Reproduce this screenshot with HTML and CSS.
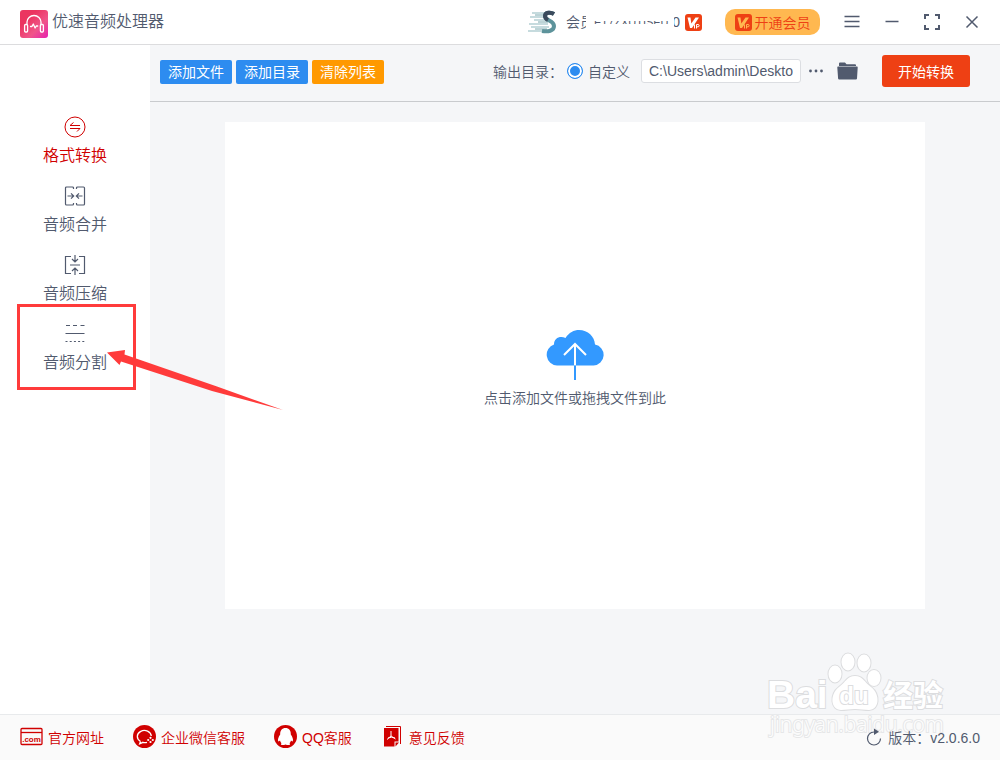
FILE: index.html
```html
<!DOCTYPE html>
<html lang="zh-CN">

<head>
    <meta charset="UTF-8" />
    <meta name="viewport" content="width=device-width, initial-scale=1.0" />
    <title>优速音频处理器</title>
    <link rel="stylesheet" href="styles.css">
</head>

<body>
    <header class="titlebar">
        <svg class="logo" viewBox="0 0 28 28" aria-hidden="true">
            <defs>
                <linearGradient id="logoBg" x1="0" y1="0" x2="1" y2="1">
                    <stop offset="0.3" stop-color="#eb3560" />
                    <stop offset="0.65" stop-color="#f0558a" />
                    <stop offset="1" stop-color="#e620b0" />
                </linearGradient>
            </defs>
            <rect width="28" height="28" rx="3" fill="url(#logoBg)" />
            <g fill="none" stroke="#fff" stroke-width="1.3" stroke-linecap="round" stroke-linejoin="round">
                <path d="M7 14v-2a7 6.5 0 0 1 14 0v2" />
                <rect x="4.6" y="14.5" width="3" height="7.5" rx="1" />
                <rect x="20.4" y="14.5" width="3" height="7.5" rx="1" />
                <path d="M10.5 16.5h1.5l1.3-2.5 1.8 4 1.2-2h1.4" />
            </g>
        </svg>
        <h1 class="app-name">优速音频处理器</h1>

        <div class="account">
            <svg class="avatar" viewBox="0 0 30 24" aria-hidden="true">
                <path d="M5 3h15M3 7h15M7 10h14M2 14h19M4 17h18M1 21h20" stroke="#b4d0d3" stroke-width="1.4" />
                <path d="M8 5h11M11 12h10M8 19h12" stroke="#7ba8ae" stroke-width="1" />
                <path d="M27 4c-3-2-9-2-9 2 0 5 9 4 9 10 0 5-6 6-12 5" fill="none" stroke="#5d939b" stroke-width="4" />
                <path d="M27 4c-3-2-9-2-9 2 0 2 1 3 3 4" fill="none" stroke="#3b4a5c" stroke-width="4" />
            </svg>
            <span class="member-label">会员</span>
            <span class="member-id"><span class="member-digits">ET7ZXUTISEU</span></span>
            <span class="member-tail">0</span>
            <svg class="vip-icon" viewBox="0 0 17 17" aria-hidden="true">
                <rect width="17" height="17" rx="3" fill="#ee4014" />
                <path d="M2.5 3.5h3l.8 6L10.5 3.5H14L7 14H5z" fill="#fff" />
                <path d="M9.5 10.5v4M11.5 14.5v-4H13a1 1 0 0 1 0 2.3h-1.5" fill="none" stroke="#fff" />
            </svg>
        </div>

        <button class="vip-button" type="button">
            <svg class="vip-icon" viewBox="0 0 17 17" aria-hidden="true">
                <rect width="17" height="17" rx="3" fill="#ee4014" />
                <path d="M2.5 3.5h3l.8 6L10.5 3.5H14L7 14H5z" fill="#ffb850" />
                <path d="M9.5 10.5v4M11.5 14.5v-4H13a1 1 0 0 1 0 2.3h-1.5" fill="none" stroke="#ffb850" />
            </svg>
            开通会员
        </button>

        <div class="window-buttons">
            <button type="button" aria-label="菜单">
                <svg viewBox="0 0 20 20"><path d="M2.5 4.5h15M2.5 9.5h15M2.5 14.5h15" /></svg>
            </button>
            <button type="button" aria-label="最小化">
                <svg viewBox="0 0 20 20"><path d="M3.5 9.5h13" /></svg>
            </button>
            <button type="button" aria-label="最大化">
                <svg viewBox="0 0 20 20"><path class="thick" d="M3 7V3h4M13 3h4v4M17 13v4h-4M7 17H3v-4" /></svg>
            </button>
            <button type="button" aria-label="关闭">
                <svg viewBox="0 0 20 20"><path d="M4.5 4.5l11 11M15.5 4.5l-11 11" /></svg>
            </button>
        </div>
    </header>

    <div class="content">
        <nav class="sidebar">
            <a class="nav-item active" href="#convert">
                <svg viewBox="0 0 22 22">
                    <circle cx="11" cy="11" r="10" />
                    <path d="M6 9.5h10M6 9.5l3.5-3M16 12.5H6M16 12.5l-3 3" />
                </svg>
                <span>格式转换</span>
            </a>
            <a class="nav-item" href="#merge">
                <svg viewBox="0 0 22 22">
                    <path d="M9.5 4V3a1 1 0 0 0-1-1h-6a1 1 0 0 0-1 1v16a1 1 0 0 0 1 1h6a1 1 0 0 0 1-1v-1M12.5 4V3a1 1 0 0 1 1-1h6a1 1 0 0 1 1 1v16a1 1 0 0 1-1 1h-6a1 1 0 0 1-1-1v-1" />
                    <path d="M3.5 11h6M7 8.3L9.7 11 7 13.7M18.5 11h-6M15 8.3L12.3 11l2.7 2.7" />
                </svg>
                <span>音频合并</span>
            </a>
            <a class="nav-item" href="#compress">
                <svg viewBox="0 0 22 22">
                    <path d="M7 2.5H1.5v17H7M15 2.5h5.5v17H15M6 11h10M11 1v7M8 5l3 3 3-3M11 21v-7M8 17l3-3 3 3" />
                </svg>
                <span>音频压缩</span>
            </a>
            <a class="nav-item" href="#split">
                <svg viewBox="0 0 22 22">
                    <path d="M2 2.5h4M9 2.5h4M16.5 2.5h4M1.5 10.5h19" />
                    <path d="M1.5 18.5h19" stroke-dasharray="2 2.2" />
                </svg>
                <span>音频分割</span>
            </a>
        </nav>

        <main class="workspace">
            <div class="toolbar">
                <div class="file-buttons">
                    <button class="btn" type="button">添加文件</button>
                    <button class="btn" type="button">添加目录</button>
                    <button class="btn btn-clear" type="button">清除列表</button>
                </div>
                <div class="output">
                    <span class="output-label">输出目录：</span>
                    <input class="radio" type="radio" id="custom_dir" name="output_dir" checked />
                    <label for="custom_dir">自定义</label>
                    <input class="path" type="text" aria-label="输出目录" value="C:\Users\admin\Deskto" />
                    <button class="icon-button dots" type="button" aria-label="更多">
                        <svg viewBox="0 0 16 6"><circle cx="2.5" cy="3" r="1.4" /><circle cx="8" cy="3" r="1.4" /><circle cx="13.5" cy="3" r="1.4" /></svg>
                    </button>
                    <button class="icon-button folder" type="button" aria-label="打开目录">
                        <svg viewBox="0 0 21 18">
                            <path d="M2 4V1.5Q2 .5 3 .5h5l1.5 1.8H18q1 0 1 1V4z" />
                            <path d="M1 4.5h19q.8 0 .7 1L20 16.5q-.1 1-1 1H2.2q-1 0-1.1-1L.3 5.5q-.1-1 .7-1z" />
                        </svg>
                    </button>
                    <button class="start" type="button">开始转换</button>
                </div>
            </div>

            <button class="drop-area" type="button">
                <svg class="cloud" viewBox="0 0 58 50" aria-hidden="true">
                    <path d="M11 35.5A10.8 10.8 0 0 1 8 14.5C8 8 14 5.5 19.5 8 23 2.5 28 0 33 0c9 0 15.5 6.5 16 14.5A10.6 10.6 0 0 1 47.5 35.5z" fill="#3399ff" />
                    <path d="M29 14v21.5M18 25l11-11 11 11" fill="none" stroke="#fff" stroke-width="2" />
                    <path d="M29 35.5V50" stroke="#3399ff" stroke-width="2" />
                </svg>
                <span>点击添加文件或拖拽文件到此</span>
            </button>
        </main>
    </div>

    <footer class="footer">
        <a href="#site">
            <svg viewBox="0 0 23 23" aria-hidden="true">
                <rect x="1" y="3.5" width="21" height="16" rx="1" fill="none" stroke="#d00000" stroke-width="1.3" />
                <path d="M1 7.5h21" stroke="#d00000" stroke-width="1.3" />
                <text class="com" x="11.5" y="17" text-anchor="middle">.com</text>
            </svg>
            官方网址
        </a>
        <a href="#wechat">
            <svg viewBox="0 0 23 23" aria-hidden="true">
                <circle cx="11.5" cy="11.5" r="11.5" fill="#d00000" />
                <path d="M7.5 16.5A7 6 0 1 1 18.3 11M7.5 16.5l-.8 2.3 3.3-1.5q2 .5 4 0" fill="none" stroke="#fff" stroke-width="1.3" />
                <circle cx="17.5" cy="12.8" r="1.1" fill="#fff" />
                <circle cx="17.5" cy="17" r="1.1" fill="#fff" />
                <circle cx="15.2" cy="15" r="1.1" fill="#fff" />
                <circle cx="19.8" cy="15" r="1.1" fill="#fff" />
            </svg>
            企业微信客服
        </a>
        <a href="#qq">
            <svg viewBox="0 0 23 23" aria-hidden="true">
                <circle cx="11.5" cy="11.5" r="11.5" fill="#d00000" />
                <path d="M11.5 3C8 3 6 5.5 6.200 9.500 4.500 12 3.500 14.500 4.200 16.300c.5.500 1.300-.3 1.800-.8.200 1.200.8 2 1.500 2.700-2 1.800 1.300 2.400 4 1.200 2.700 1.200 6 .6 4-1.200.7-.7 1.300-1.500 1.500-2.700.5.500 1.300 1.300 1.800.8.700-1.800-.3-4.300-2-6.800.2-4-1.800-6.500-5.300-6.500z" fill="#fff" />
            </svg>
            QQ客服
        </a>
        <a href="#feedback">
            <svg viewBox="0 0 23 23" aria-hidden="true">
                <path d="M5 1.5h14.500V19" fill="none" stroke="#d00000" />
                <path d="M3 3h14.500v13.500h-4V21.500H3z" fill="#d00000" />
                <path d="M14.500 21.500v-4h3.500z" fill="#d00000" />
                <path d="M10 6v5l-4 3.500M10 11l4.500 3M7 13q3.500-1.500 7 0" fill="none" stroke="#fff" />
            </svg>
            意见反馈
        </a>
        <div class="version">
            <svg viewBox="0 0 16 18" aria-hidden="true">
                <path d="M8 4A6.500 6.500 0 1 0 14.500 10.500" fill="none" stroke="#515a6e" stroke-width="1.2" />
                <path d="M8 .5v6.500l5-3.200z" fill="#515a6e" />
            </svg>
            版本：v2.0.6.0
        </div>
    </footer>

    <!-- 水印 -->
    <svg class="watermark" viewBox="0 0 190 90" aria-hidden="true">
        <g class="mark">
            <text class="bai" x="5" y="56">Bai</text>
            <ellipse cx="73" cy="22" rx="6.5" ry="8.5" />
            <ellipse cx="86" cy="10" rx="6.5" ry="8.5" />
            <ellipse cx="102" cy="11" rx="6.5" ry="8.5" />
            <ellipse cx="112" cy="26" rx="6.5" ry="8" />
            <path d="M93 24c8 0 9 6 16 11 10 8 8 23-2 23-5 0-9-1-14-1s-9 1-14 1c-10 0-12-15-2-23 7-5 8-11 16-11z" />
            <text class="du" x="92" y="52" text-anchor="middle">du</text>
            <text class="jingyan" x="121" y="54">经验</text>
            <text class="url" x="8" y="80">jingyan.baidu.com</text>
        </g>
    </svg>

    <!-- 标注：音频分割 -->
    <svg class="callout" viewBox="0 0 270 110" aria-hidden="true">
        <rect x="1.5" y="1.5" width="116" height="83" fill="none" stroke="#ff3b3b" stroke-width="3" />
        <path d="M90 48.5L108 46l-.5 4.500L200 82.500 266 106 195 87 104 57.500l-1.500 3.500z" fill="#ff3b3b" />
    </svg>
</body>

</html>
```
FILE: styles.css
```css
* {
    box-sizing: border-box;
}

body {
    display: flex;
    flex-direction: column;
    position: relative;
    min-height: 100vh;
    margin: 0;
    background-color: #fff;
    color: #515a6e;
    font-family: "Liberation Sans", "Noto Sans CJK SC", sans-serif;
    font-size: 14px;
    font-weight: 350;
}

button,
input {
    font: inherit;
    color: inherit;
}

button {
    padding: 0;
    border: 0;
    background: none;
    white-space: nowrap;
    cursor: pointer;
}

a {
    color: inherit;
    text-decoration: none;
}

svg {
    display: block;
    flex-shrink: 0;
}

/* 标题栏 */
.titlebar {
    display: flex;
    align-items: center;
    height: 45px;
    padding: 0 8px 0 20px;
    border-bottom: 1px solid #dcdcde;
}

.logo {
    width: 28px;
    height: 28px;
    margin-top: 4px;
}

.app-name {
    margin: 0 auto 0 4px;
    font-size: 16px;
    font-weight: 350;
    line-height: 24px;
}

.account {
    display: flex;
    align-items: center;
    line-height: 20px;
}

.avatar {
    width: 30px;
    height: 24px;
    margin-right: 9px;
}

.member-label {
    width: 20px;
    overflow: hidden;
    white-space: nowrap;
}

/* 会员号只露出一条 */
.member-id {
    display: flex;
    align-items: center;
    width: 80px;
    height: 3px;
    margin-left: 8px;
    overflow: hidden;
}

.member-digits {
    font-size: 11px;
}

.member-tail {
    display: flex;
    justify-content: flex-end;
    width: 6px;
    margin-right: 5px;
    overflow: hidden;
}

.vip-icon {
    width: 17px;
    height: 17px;
}

.vip-button {
    display: flex;
    align-items: center;
    justify-content: center;
    gap: 3px;
    width: 95px;
    height: 26px;
    margin: 0 12px 0 23px;
    border-radius: 10px;
    background-color: #ffb850;
    color: #ee4014;
}

.window-buttons {
    display: flex;
}

.window-buttons button {
    display: flex;
    align-items: center;
    justify-content: center;
    width: 40px;
    height: 40px;
}

.window-buttons svg {
    width: 20px;
    height: 20px;
    fill: none;
    stroke: #515a6e;
    stroke-width: 1.5;
}

.window-buttons .thick {
    stroke-width: 2;
}

/* 中间区域 */
.content {
    display: flex;
    flex: 1;
}

.sidebar {
    display: flex;
    flex-direction: column;
    align-items: center;
    gap: 11px;
    width: 150px;
    padding-top: 68px;
}

.nav-item {
    font-size: 16px;
    line-height: 30px;
}

.nav-item svg {
    width: 22px;
    height: 22px;
    margin: 3px auto;
    fill: none;
    stroke: #515a6e;
    stroke-width: 1.2;
}

.nav-item.active {
    color: #d00000;
}

.nav-item.active svg {
    stroke: #d00000;
    stroke-width: 1;
}

.workspace {
    display: flex;
    flex: 1;
    flex-direction: column;
    background-color: #f5f6f8;
}

.toolbar {
    display: flex;
    align-items: center;
    justify-content: space-between;
    height: 57px;
    padding: 0 30px 4px 10px;
    border-bottom: 1px solid #c9cbce;
}

.file-buttons {
    display: flex;
    gap: 4px;
    padding-top: 2px;
}

.btn {
    width: 72px;
    height: 24px;
    border-radius: 2px;
    background-color: #2d8cf0;
    color: #fff;
    font-weight: 400;
    line-height: 22px;
}

.btn-clear {
    background-color: #ff9900;
}

.output {
    display: flex;
    align-items: center;
}

.radio {
    appearance: none;
    width: 16px;
    height: 16px;
    margin: 0 5px 0 4px;
    border: 1px solid #2d8cf0;
    border-radius: 50%;
    background-color: #2d8cf0;
    box-shadow: inset 0 0 0 2px #fff;
}

.path {
    width: 160px;
    height: 24px;
    margin: 0 7px 0 11px;
    padding: 0 7px;
    border: 1px solid #dcdee2;
    border-radius: 3px;
    background-color: #fff;
}

.icon-button svg {
    width: 100%;
    fill: #515a6e;
}

.dots {
    width: 16px;
    margin-right: 13px;
}

.folder {
    width: 21px;
    margin-right: 24px;
}

.start {
    width: 88px;
    height: 32px;
    border-radius: 3px;
    background-color: #ee4014;
    color: #fff;
    font-weight: 400;
}

.drop-area {
    display: flex;
    flex: 1;
    flex-direction: column;
    align-items: center;
    justify-content: center;
    margin: 20px 75px 105px;
    padding-top: 15px;
    background-color: #fff;
    line-height: 36px;
}

.cloud {
    width: 58px;
    height: 50px;
}

/* 底部 */
.footer {
    display: flex;
    align-items: center;
    gap: 29px;
    height: 46px;
    padding: 0 20px 2px;
    border-top: 1px solid #e8eaec;
    background-color: #fafafa;
}

.footer a {
    display: flex;
    align-items: center;
    gap: 5px;
    color: #d00000;
}

.footer a svg {
    width: 23px;
    height: 23px;
}

.com {
    fill: #d00000;
    font-size: 8px;
    font-weight: bold;
}

.version {
    display: flex;
    align-items: center;
    gap: 6px;
    position: relative;
    z-index: 1;
    margin-left: auto;
}

.version svg {
    width: 16px;
    height: 18px;
}

/* 覆盖层 */
.watermark {
    position: absolute;
    right: 48px;
    bottom: 18px;
    width: 190px;
    height: 90px;
    pointer-events: none;
}

.mark {
    fill: #fff;
    stroke: #dcdddf;
    stroke-width: 2;
    paint-order: stroke;
}

.bai {
    font-size: 39px;
    font-weight: bold;
}

.du {
    font-size: 24px;
    font-weight: bold;
}

.jingyan {
    font-size: 30px;
    font-weight: bold;
}

.url {
    font-family: "Noto Sans", sans-serif;
    font-size: 21px;
    fill: #fdfdfd;
    stroke: #e6e7e8;
}

.callout {
    position: absolute;
    top: 304px;
    left: 17px;
    width: 270px;
    height: 110px;
    pointer-events: none;
}
```
